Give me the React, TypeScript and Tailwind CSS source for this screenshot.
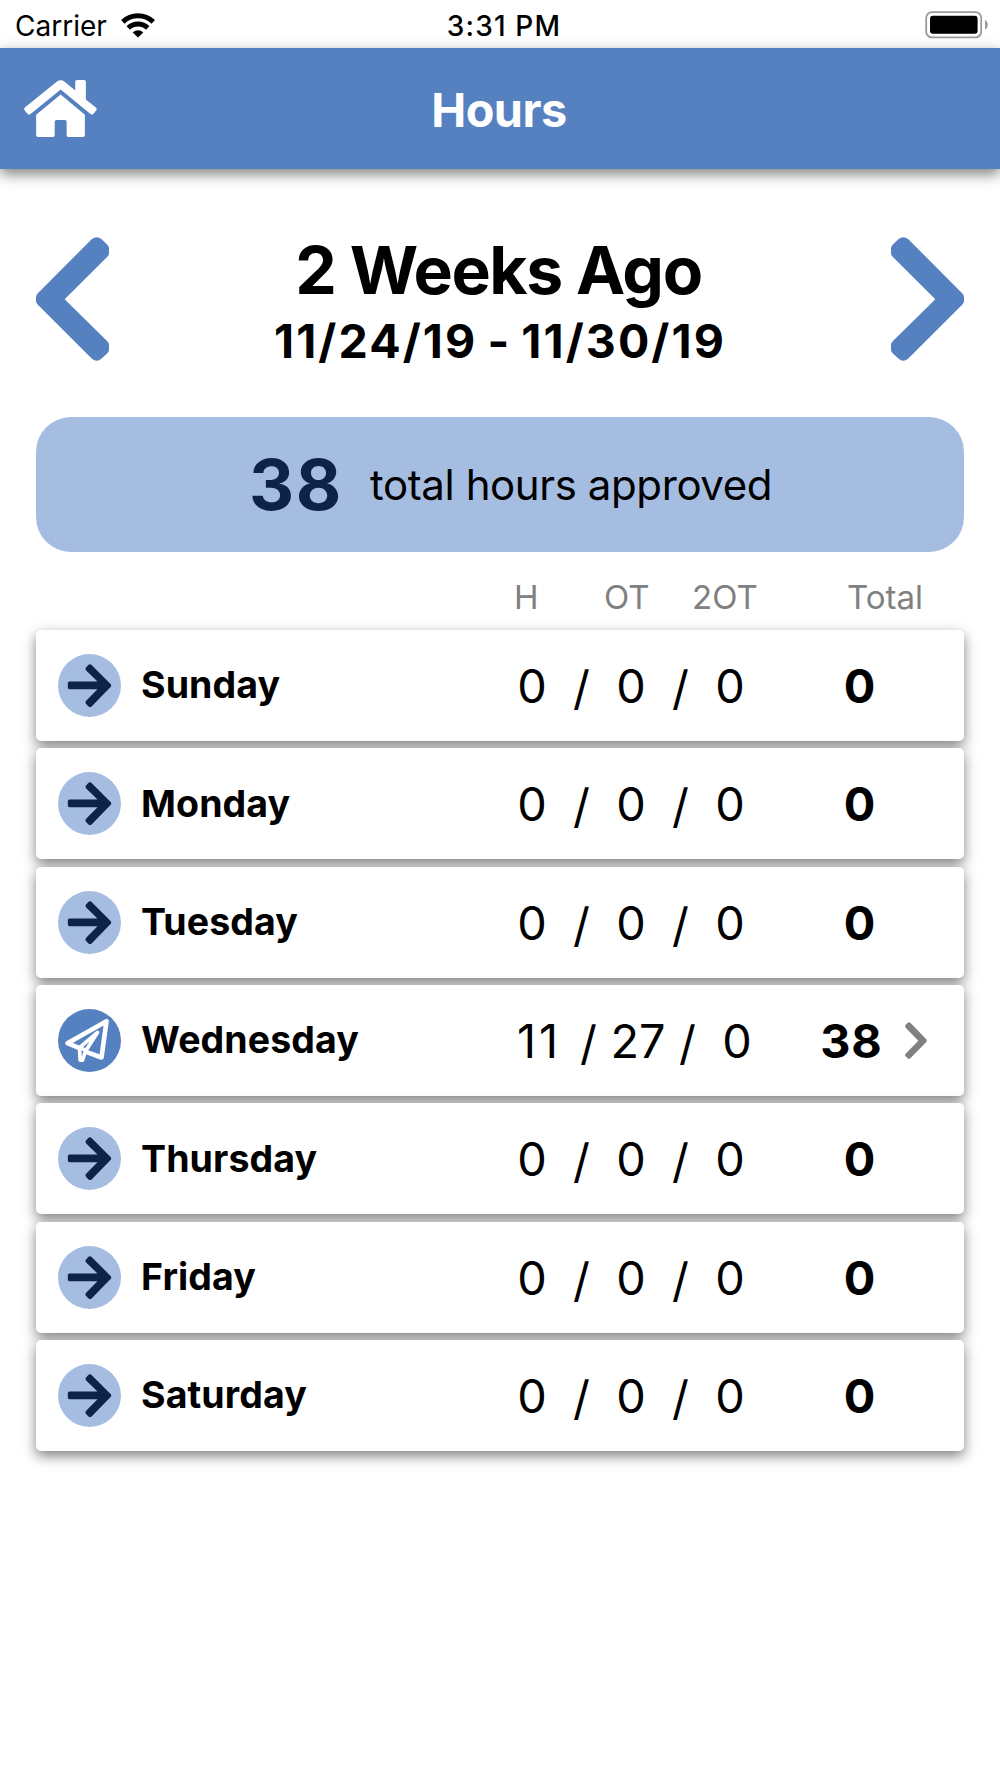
import clsx from "clsx";

type DayEntry = {
    name: string;
    hours: number;
    overtime: number;
    doubleTime: number;
    submitted?: boolean;
}

const week: DayEntry[] = [
    { name: "Sunday", hours: 0, overtime: 0, doubleTime: 0 },
    { name: "Monday", hours: 0, overtime: 0, doubleTime: 0 },
    { name: "Tuesday", hours: 0, overtime: 0, doubleTime: 0 },
    { name: "Wednesday", hours: 11, overtime: 27, doubleTime: 0, submitted: true },
    { name: "Thursday", hours: 0, overtime: 0, doubleTime: 0 },
    { name: "Friday", hours: 0, overtime: 0, doubleTime: 0 },
    { name: "Saturday", hours: 0, overtime: 0, doubleTime: 0 },
];

function WifiIcon() {
    return (
        <svg className="h-[25px] w-[34px]" viewBox="0 0 34 25" fill="none" stroke="#000" strokeWidth="5">
            <path d="M1.800 8.900a22 22 0 0 1 30.400 0" />
            <path d="M7.300 15a14 14 0 0 1 19.400 0" />
            <path d="M17 24.600l-5.300-5.200a7.600 7.600 0 0 1 10.600 0z" fill="#000" stroke="none" />
        </svg>
    )
}

function BatteryIcon() {
    return (
        <svg className="h-[28px] w-[64px]" viewBox="0 0 64 28">
            <rect x="1.200" y="1.200" width="55" height="25.200" rx="5.600" fill="none" stroke="#999" strokeWidth="1.800" />
            <rect x="5" y="4.800" width="47.600" height="18" rx="3" fill="#000" />
            <path d="M60 9v9.600c1.800-.9 2.800-2.600 2.800-4.800S61.800 9.900 60 9z" fill="#999" />
        </svg>
    )
}

function HomeIcon() {
    return (
        <svg className="h-[57px] w-[73px]" viewBox="72 240 219 172" fill="#fff">
            <path d="M74 323L170 245Q182 236 194 245L226 272V245Q226 240 231 240H253Q258 240 258 245V299L288 323Q293 328 289 332L281 342Q277 347 271 342L182 269L92 342Q86 347 82 342L74 333Q70 328 74 323Z" />
            <path d="M182 284L255 345V406Q255 412 249 412H205Q200 412 200 407V366Q200 361 195 361H169Q164 361 164 366V407Q164 412 158 412H114Q108 412 108 406V345Z" />
        </svg>
    )
}

function WeekArrow({ flip }: { flip?: boolean }) {
    return (
        <svg className={clsx("h-[124px] w-[73px]", flip && "-scale-x-100")} viewBox="108 82 219 371" fill="#5681c0">
            <path d="M112 252L275 88Q290 76 305 88L322 105Q327 111 327 115V132Q327 136 322 141L194 268L322 394Q327 400 327 404V420Q327 425 322 430L305 446Q290 460 275 446L112 283Q108 278 108 273V262Q108 257 112 252Z" />
        </svg>
    )
}

function ArrowBadge() {
    return (
        <svg className="size-[63px] shrink-0" viewBox="173.500 761.500 189 189">
            <circle cx="268" cy="856" r="94.500" fill="#a6bde2" />
            <path fill="#0d2447" d="M257 803L265 794Q270 790 275 795L332 852Q335 856 332 860L275 918Q270 923 265 919L257 911Q254 907 258 902L292 867H208Q203 867 203 862V849Q203 844 208 844H292L258 811Q254 807 257 803Z" />
        </svg>
    )
}

function PlaneBadge() {
    return (
        <svg className="size-[63px] shrink-0" viewBox="173.500 146.500 189 189">
            <circle cx="268" cy="241" r="94.500" fill="#5681c0" />
            <g fill="none" stroke="#fff" strokeLinecap="round" strokeLinejoin="round">
                <path strokeWidth="14" d="M236 263L202 249L319 183L304 292L260 276" />
                <path strokeWidth="11" d="M237 263L292 217L256 273L247 300H240L238 263L258 270" />
            </g>
        </svg>
    )
}

function Chevron() {
    return (
        <svg className="h-[37px] w-[22px] shrink-0" viewBox="1217 187 66 111" fill="#808080">
            <path d="M1218 197L1225 189Q1229 186 1233 189L1281 239Q1284 243 1281 247L1233 296Q1229 300 1225 296L1218 289Q1216 286 1219 282L1257 243L1219 204Q1216 200 1218 197Z" />
        </svg>
    )
}

function DayRow({ day }: { day: DayEntry }) {
    const total = day.hours + day.overtime + day.doubleTime;

    return (
        <div className="flex h-[111px] items-center rounded-[5px] bg-white pl-[22px] shadow-[0_5px_13px_rgba(0,0,0,0.5)]">
            {day.submitted ? <PlaneBadge /> : <ArrowBadge />}
            <p className="w-[379px] shrink-0 pb-px pl-[20px] text-[37.500px] font-bold tracking-[0.100px]">{day.name}</p>

            {/* H / OT / 2OT */}
            <div className={clsx("flex w-[262px] shrink-0 items-center pt-[2px] text-center text-[46.800px]", day.submitted && "pl-[7px]")}>
                <span className={clsx("w-[64px] shrink-0", day.submitted && "tracking-[3px]")}>{day.hours}</span>
                <span className="w-[35px] shrink-0 pt-[4px]">/</span>
                <span className="w-[64px] shrink-0">{day.overtime}</span>
                <span className="w-[35px] shrink-0 pt-[4px]">/</span>
                <span className="w-[64px] shrink-0">{day.doubleTime}</span>
            </div>

            <p className={clsx("w-[143px] shrink-0 pt-[2px] text-center text-[46.800px] font-bold tracking-[1px]", day.submitted ? "pl-[36px]" : "pl-[53px]")}>{total}</p>
            {day.submitted && <Chevron />}
        </div>
    )
}

function App() {
    const approved = week.reduce((sum, d) => sum + d.hours + d.overtime + d.doubleTime, 0);

    return (
        <div className="h-[1778px] w-[1000px] overflow-hidden bg-white font-['Inter',sans-serif] leading-none text-black">
            {/* status bar */}
            <div className="grid h-[48px] grid-cols-3 items-center pt-[2px] pr-[11px] pl-[15px] text-[28px]">
                <div className="flex items-center gap-[14px]">
                    <span className="pt-px">Carrier</span>
                    <WifiIcon />
                </div>
                <span className="pt-px pl-[4px] text-center font-medium tracking-[1.200px]">3:31 PM</span>
                <div className="flex justify-end">
                    <BatteryIcon />
                </div>
            </div>

            {/* nav */}
            <div className="grid h-[121px] grid-cols-3 items-center bg-[#5681c0] px-[24px] shadow-[0_5px_13px_rgba(0,0,0,0.5)]">
                <HomeIcon />
                <h1 className="pt-[3px] pr-[2px] text-center text-[46.800px] font-bold tracking-[-0.500px] text-white">Hours</h1>
            </div>

            {/* week picker */}
            <div className="flex items-start justify-between px-[36px] pt-[68px]">
                <WeekArrow />
                <div className="text-center">
                    <h2 className="pr-[3px] text-[66px] font-bold tracking-[-1.400px]">2 Weeks Ago</h2>
                    <p className="mt-[14.500px] text-[46.500px] font-bold tracking-[2.100px] [word-spacing:-3px]">11/24/19 - 11/30/19</p>
                </div>
                <WeekArrow flip />
            </div>

            {/* approved hours */}
            <div className="mx-[36px] mt-[53px] flex h-[135px] items-center rounded-[35px] bg-[#a6bde2] pl-[213px]">
                <span className="w-[121px] pt-px text-[70px] font-bold tracking-[1.500px] text-[#0d2447]">{approved}</span>
                <span className="text-[42px] tracking-[-0.400px]">total hours approved</span>
            </div>

            {/* column headings */}
            <div className="flex h-[78px] items-center pt-[12px] pl-[514px] text-[33px] text-[#808080]">
                <span className="w-[90px]">H</span>
                <span className="w-[88px]">OT</span>
                <span className="w-[155px]">2OT</span>
                <span>Total</span>
            </div>

            <div className="mx-[36px] flex flex-col gap-[7.330px]">
                {week.map((day) => <DayRow key={day.name} day={day} />)}
            </div>
        </div>
    )
}


export default App;
